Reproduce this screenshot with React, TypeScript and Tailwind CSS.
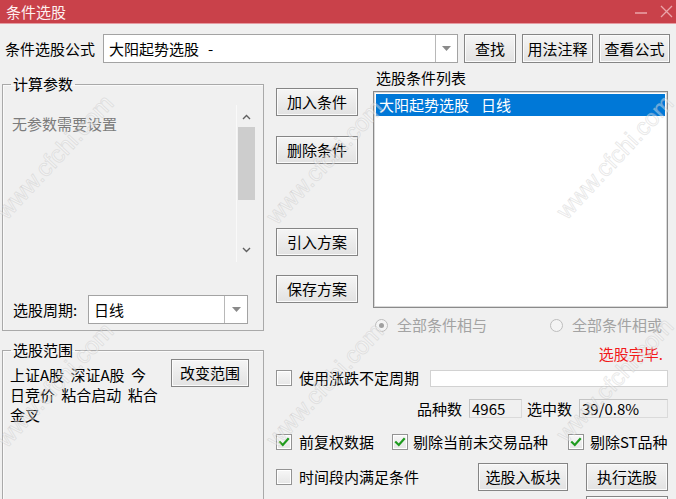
import React from "react";

const FONT = "font-['Noto_Sans_CJK_SC','Noto_Sans',sans-serif]";

function Btn({ children, className = "" }: { children: React.ReactNode; className?: string }) {
  return (
    <div
      className={
        "flex shrink-0 items-center justify-center border border-[#858585] bg-linear-to-b from-[#f5f5f5] to-[#e2e2e2] shadow-[inset_0_0_0_1px_#fbfbfb] text-[15px] leading-[18px] text-black " +
        className
      }
    >
      {children}
    </div>
  );
}

function Arrow() {
  return (
    <svg width="9" height="5" viewBox="0 0 9 5">
      <path d="M0 0 L9 0 L4.5 5 Z" fill="#8a8a8a" />
    </svg>
  );
}

function Combo({ children, className = "", arrowW = "w-[22px]" }: { children: React.ReactNode; className?: string; arrowW?: string }) {
  return (
    <div className={"flex shrink-0 border border-[#a3a3a3] bg-white " + className}>
      <div className="flex flex-1 items-center pl-[5px] text-[15px] leading-[18px] text-black">{children}</div>
      <div className={"flex items-center justify-center border-l border-[#b8b8b8] " + arrowW}>
        <Arrow />
      </div>
    </div>
  );
}

function Check({ checked }: { checked?: boolean }) {
  return (
    <div className="flex h-[16px] w-[16px] shrink-0 items-center justify-center border border-[#939393] bg-linear-to-b from-[#f7f7f7] to-[#e6e6e6] shadow-[inset_0_0_0_1px_#ffffff]">
      {checked && (
        <svg width="12" height="12" viewBox="0 0 12 12">
          <path d="M2 6.2 L4.8 9 L10 3" fill="none" stroke="#1e9b1e" strokeWidth="2.2" strokeLinecap="square" />
        </svg>
      )}
    </div>
  );
}

function Radio({ checked }: { checked?: boolean }) {
  return (
    <div className="flex h-[13px] w-[13px] shrink-0 items-center justify-center rounded-full border border-[#bdbdbd] bg-[#f4f4f4]">
      {checked && <div className="h-[5px] w-[5px] rounded-full bg-[#a0a0a0]" />}
    </div>
  );
}

function Chevron({ up }: { up?: boolean }) {
  return (
    <svg width="9" height="6" viewBox="0 0 9 6">
      <path d={up ? "M1 5 L4.5 1.5 L8 5" : "M1 1 L4.5 4.5 L8 1"} fill="none" stroke="#606060" strokeWidth="1.4" />
    </svg>
  );
}

const marks: { x: number; y: number }[] = [
  { x: 55, y: 157 },
  { x: 325, y: 162 },
  { x: 615, y: 157 },
  { x: 55, y: 385 },
  { x: 325, y: 385 },
  { x: 615, y: 380 },
];

export default function App() {
  return (
    <div className={"relative h-[499px] w-[676px] overflow-hidden bg-[#f0f0f0] text-[15px] text-black " + FONT}>
      {/* title bar */}
      <div className="flex h-[23px] items-center bg-[#c9414a] pl-[6px] pr-[3px]">
        <span className="text-[15px] leading-[18px] text-[#fdf0f0]">条件选股</span>
        <div className="ml-auto flex items-center gap-[12px]">
          <svg width="14" height="14" viewBox="0 0 14 14">
            <path d="M1 8 L13 8" stroke="#eaa5aa" strokeWidth="1.5" />
          </svg>
          <svg width="13" height="13" viewBox="0 0 13 13">
            <path d="M1 1 L12 12 M12 1 L1 12" stroke="#eaa5aa" strokeWidth="1.3" />
          </svg>
        </div>
      </div>
      <div className="h-px bg-[#e59ca2]" />

      {/* formula row */}
      <div className="mt-[10px] flex h-[29px] items-center pl-[5px]">
        <span className="w-[98px] shrink-0 leading-[18px]">条件选股公式</span>
        <Combo className="h-full w-[355px]">
          <span>大阳起势选股</span>
          <span className="ml-[9px]">-</span>
        </Combo>
        <Btn className="ml-[6px] h-full w-[52px]">查找</Btn>
        <Btn className="ml-[6px] h-full w-[71px]">用法注释</Btn>
        <Btn className="ml-[6px] h-full w-[71px]">查看公式</Btn>
      </div>

      {/* main */}
      <div className="flex">
        {/* left column */}
        <div className="ml-[2px] mt-[12px] w-[262px] shrink-0">
          <fieldset className="h-[256px] border border-[#a9a9a9] px-[8px] shadow-[inset_1px_1px_0_#fafafa]">
            <legend className="px-[2px] text-[15px] leading-[18px]">计算参数</legend>
            <div className="mt-[12px] flex h-[157px]">
              <div className="flex-1 pl-[1px] pt-[10px] text-[15px] leading-[18px] text-[#7c7c7c]">无参数需要设置</div>
              <div className="mr-[-1px] flex w-[20px] flex-col border-l border-[#f9f9f9]">
                <div className="flex h-[22px] items-center justify-center pt-[2px]">
                  <Chevron up />
                </div>
                <div className="mx-[1px] h-[73px] bg-[#cdcdcd]" />
                <div className="flex flex-1 items-end justify-center pb-[9px]">
                  <Chevron />
                </div>
              </div>
            </div>
            <div className="mt-[33px] flex h-[29px] items-center">
              <span className="w-[77px] shrink-0 pl-[2px] leading-[18px]">选股周期:</span>
              <Combo className="h-full w-[160px]" arrowW="w-[23px]">
                日线
              </Combo>
            </div>
          </fieldset>

          <fieldset className="mt-[10px] h-[200px] border border-[#a9a9a9] px-[8px] shadow-[inset_1px_1px_0_#fafafa]">
            <legend className="px-[2px] text-[15px] leading-[18px]">选股范围</legend>
            <div className="flex">
              <div className="ml-[-1px] w-[161px] shrink-0 whitespace-pre pt-[6px] text-[15px] leading-[20px] [word-spacing:3px]">
                {"上证A股 深证A股 今"}
                <br />
                {"日竞价 粘合启动 粘合"}
                <br />
                金叉
              </div>
              <Btn className="h-[28px] w-[78px]">改变范围</Btn>
            </div>
          </fieldset>
        </div>

        {/* right region */}
        <div className="ml-[12px] w-[392px] shrink-0">
          <div className="flex">
            <div className="flex w-[82px] shrink-0 flex-col pt-[25px]">
              <Btn className="h-[28px] w-full">加入条件</Btn>
              <Btn className="mt-[20px] h-[28px] w-full">删除条件</Btn>
              <Btn className="mt-[64px] h-[28px] w-full">引入方案</Btn>
              <Btn className="mt-[19px] h-[28px] w-full">保存方案</Btn>
            </div>
            <div className="ml-[15px] w-[295px] shrink-0">
              <div className="mt-[6px] pl-[3px] leading-[18px]">选股条件列表</div>
              <div className="mt-[4px] h-[217px] border border-[#8a8a8a] bg-white p-[2px] shadow-[inset_0_0_0_1px_#d9d9d9]">
                <div className="flex h-[22px] items-center bg-[#0078d7] pl-[3px] leading-[18px] text-white">
                  <span>大阳起势选股</span>
                  <span className="ml-[12px]">日线</span>
                </div>
              </div>
              <div className="mt-[8px] flex h-[18px] items-center pl-[2px] text-[#a3a3a3]">
                <div className="flex w-[175px] shrink-0 items-center">
                  <Radio checked />
                  <span className="ml-[9px] leading-[18px]">全部条件相与</span>
                </div>
                <Radio />
                <span className="ml-[9px] leading-[18px]">全部条件相或</span>
              </div>
            </div>
          </div>

          <div className="mt-[11px] pr-[5px] text-right leading-[18px] text-[#f21a1a]">选股完毕.</div>

          <div className="mt-[6px] flex h-[18px] items-center">
            <Check />
            <span className="ml-[7px] leading-[18px]">使用涨跌不定周期</span>
            <div className="ml-auto h-[17px] w-[238px] border border-[#d2d2d2] bg-white" />
          </div>

          <div className="mt-[12px] flex h-[19px] items-center justify-end">
            <span className="leading-[18px]">品种数</span>
            <div className="ml-[7px] flex h-full w-[53px] items-center border border-[#dadada] border-l-[#c4c4c4] border-t-[#c4c4c4] pl-[2px] leading-[18px]">
              4965
            </div>
            <span className="ml-[5px] leading-[18px]">选中数</span>
            <div className="ml-[7px] flex h-full w-[89px] items-center border border-[#dadada] border-l-[#c4c4c4] border-t-[#c4c4c4] pl-[2px] leading-[18px]">
              39/0.8%
            </div>
          </div>

          <div className="mt-[15px] flex h-[18px] items-center">
            <div className="flex w-[116px] shrink-0 items-center">
              <Check checked />
              <span className="ml-[7px] leading-[18px]">前复权数据</span>
            </div>
            <div className="flex w-[176px] shrink-0 items-center">
              <Check checked />
              <span className="ml-[5px] leading-[18px]">剔除当前未交易品种</span>
            </div>
            <div className="flex items-center">
              <Check checked />
              <span className="ml-[6px] leading-[18px]">剔除ST品种</span>
            </div>
          </div>

          <div className="mt-[12px] flex items-start">
            <div className="flex h-[28px] flex-1 items-center">
              <Check />
              <span className="ml-[7px] leading-[18px]">时间段内满足条件</span>
            </div>
            <Btn className="h-[28px] w-[90px]">选股入板块</Btn>
            <div className="ml-[18px] flex w-[82px] flex-col">
              <Btn className="h-[28px] w-full">执行选股</Btn>
              <Btn className="mt-[5px] h-[28px] w-full">&nbsp;</Btn>
            </div>
          </div>
        </div>
      </div>

      {/* watermark overlay */}
      {marks.map((m, i) => (
        <div
          key={i}
          className="pointer-events-none absolute -translate-x-1/2 -translate-y-1/2 rotate-[-47deg] whitespace-nowrap font-['Liberation_Sans',sans-serif] text-[24px] leading-none text-white/40 [-webkit-text-stroke:1px_rgba(175,175,175,0.28)]"
          style={{ left: m.x, top: m.y }}
        >
          www.cfchi.com
        </div>
      ))}
    </div>
  );
}
